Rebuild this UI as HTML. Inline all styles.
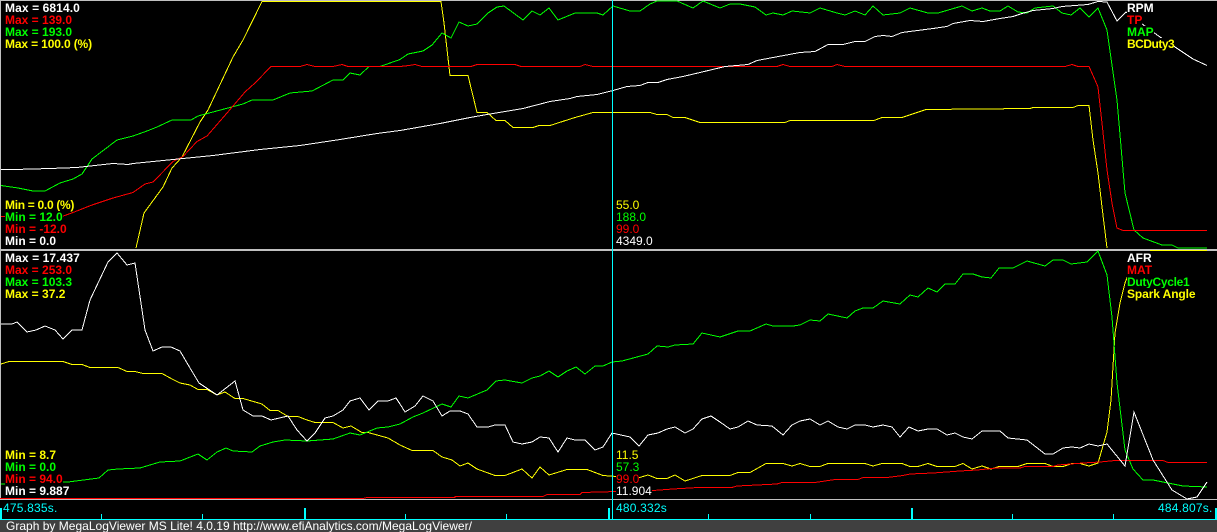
<!DOCTYPE html>
<html><head><meta charset="utf-8"><title>MegaLogViewer</title>
<style>
html,body{margin:0;padding:0;background:#000;width:1217px;height:532px;overflow:hidden}
#r{position:relative;width:1217px;height:532px;background:#000;overflow:hidden;font:12px/12px "Liberation Sans",Arial,sans-serif}
svg{position:absolute;left:0;top:0}
.t{position:absolute;white-space:pre;height:12px;line-height:12px;background:#000}
.b{font-weight:bold}
.w{color:#fff}.r{color:#f00}.g{color:#0f0}.y{color:#ff0}.c{color:#0ff;letter-spacing:.2px}
#s{position:absolute;left:0;top:520px;width:1217px;height:12px;background:#404040;color:#fff;line-height:12px}
#s span{position:absolute;left:6px;top:0;white-space:pre;letter-spacing:.01px}
</style></head><body><div id="r">
<svg width="1217" height="532" shape-rendering="crispEdges" fill="none" stroke-width="1">
<rect x="0" y="0" width="1217" height="1" fill="#c0c0c0"/>
<rect x="0" y="0" width="1" height="500" fill="#c0c0c0"/>
<rect x="0" y="249" width="1217" height="2" fill="#c0c0c0"/>
<rect x="0" y="499" width="1217" height="1" fill="#c0c0c0"/>

<polyline stroke="#ff0" points="136,248 144,213 163,187 172,168 182,157 200,122 208,110 233,57 243,40 262,1.5 441,1.5 444,23 450,75.5 468,75.5 477,112.5 487,112.5 496,120.5 505,120.5 513,127.5 533,127.5 539,125.5 550,125.5 575,117.5 593,112.5 650,112.5 657,114.5 667,114.5 673,117.5 685,117.5 700,122.5 785,122.5 790,120.5 874,120.5 882,117.5 902,117.5 926,109.5 1030,108.5 1033,107.5 1073,107.5 1078,105.5 1089,105.5 1093,140 1098,173 1102,207 1107,248"/>
<polyline stroke="#0f0" points="1,185.5 18,188 33,191 45,191 60,183 73,179 82,174 92,159 117,140 133,136 147,131 157,127 172,120 191,120 198,116 213,112 243,104 252,100 273,100 290,93 312,91 333,80 343,80 350,73 360,75 369,66.5 380,66.5 400,59.5 408,54 423,51 432,45 442,33 451,38 459,22 468,26 477,24 488,13 497,7 504,6 523,20 532,11 540,15 549,8 558,20 575,13 597,13 603,15 613,6 630,11 640,11 650,4 657,1 677,1 693,8 703,1 720,8 730,4 740,4 755,7 766,15 773,13 783,15 792,11 810,13 820,8 837,13 845,15 855,11 865,15 873,6 883,15 900,13 910,8 928,13 938,13 962,6 972,11 982,8 990,11 1000,11 1008,6 1018,12 1027,13 1035,8 1053,6 1062,13 1071,15 1080,8 1089,17 1098,8 1107,30 1117,100 1125,193 1134,230 1143,238 1162,245 1172,245 1178,248 1207,248"/>
<polyline stroke="#f00" points="1,216.5 62,216.5 73,212.5 92,205 113,198 133,192.5 145,184 153,182 173,161.5 183,156.5 197,141.5 207,136 227,113 245,92 255,83 271,66.5 300,66.5 307,64.5 315,66.5 333,66.5 342,64.5 348,66.5 400,66.5 409,65.5 415,64.5 422,66.5 471,66.5 477,64.5 515,64.5 521,66.5 580,66.5 585,64.5 593,66.5 777,66.5 783,64.5 790,66.5 832,66.5 837,64.5 845,66.5 1065,66.5 1072,64.5 1078,66.5 1089,66.5 1095,80 1098,87 1102,123 1107,170 1112,203 1117,228 1123,230.5 1207,230.5"/>
<polyline stroke="#fff" points="1,169.5 14,169.5 50,168.5 77,167.5 113,163.5 128,164.5 133,163.5 173,159.5 213,155.5 260,149.5 300,145.5 340,139.5 377,133.5 400,130.5 440,123.5 470,117.5 487,114.5 523,108.5 550,101.5 570,98.5 577,96.5 597,94.5 613,90.5 627,86.5 640,85.5 648,82.5 658,82.5 667,79.5 683,76.5 700,72.5 725,66.5 748,64.5 757,60.5 773,57.5 800,52.5 815,51.5 828,44.5 843,44.5 855,41.5 865,41.5 875,36.5 883,35.5 892,36.5 902,32.5 933,28.5 947,26.5 953,23.5 970,20.5 983,21.5 1000,18.5 1013,16.5 1022,13.5 1033,10.5 1053,8.5 1062,6.5 1088,4.5 1098,1.5 1107,2 1117,21 1126,12 1153,32 1160,37 1175,47 1193,59 1207,65.5"/>
<polyline stroke="#ff0" points="1150,250.5 1207,250.5"/>

<polyline stroke="#ff0" points="1,364 9,361.5 63,361.5 72,364.5 82,364.5 90,367.5 118,367.5 127,371.5 135,371.5 143,373.5 162,373.5 172,379 180,383 190,385 198,389.5 207,389.5 217,395 225,392 235,398.5 243,398.5 262,404 270,410.5 278,410.5 288,416.5 298,416.5 307,420 315,422.5 333,422.5 343,428 351,426 362,432.5 368,432.5 388,438 400,445 412,450.5 433,450.5 442,457 452,460 460,466 468,463 477,469 495,475.5 505,475.5 522,469 532,478 540,467 549,475 567,469.5 587,469.5 603,475.5 638,478 648,475 657,478.5 667,478.5 675,475 685,481 702,475.5 730,475.5 738,472.5 750,472.5 766,463.5 783,463.5 792,466 800,463.5 810,466.5 820,466.5 828,463.5 865,463.5 873,466 882,463.5 902,463.5 910,466.5 918,466.5 928,463.5 937,466.5 955,466.5 963,463.5 972,469 982,466 991,469 999,466.5 1018,466.5 1027,463.5 1045,463.5 1053,466.5 1063,466.5 1072,463.5 1080,463.5 1089,466 1098,463 1107,432 1111,400 1115,333 1120,303 1125,283 1130,270 1140,260"/>
<polyline stroke="#0f0" points="1,484 68,482 99,478 108,470 118,469 140,468 160,462 180,461 198,454 207,460 217,452 226,448 233,451 252,452 260,446 273,442 285,440 307,441 333,439 350,433 360,435 377,428 388,427 400,424 413,417 423,413 442,404 451,407 459,396 468,398 487,390 496,381 505,380 522,383 532,378 540,376 549,371 558,377 567,371 576,367 585,374 595,366 603,366 612,362 622,361 648,354 657,346 668,347 675,345 693,344 702,333 720,337 738,331 750,331 766,324 773,326 793,326 800,325 810,320 820,321 828,314 847,318 855,311 863,308 873,308 883,301 900,304 910,295 918,297 928,288 937,292 945,284 955,284 963,274 973,274 982,277 991,278 999,268 1013,268 1027,261 1045,266 1053,260 1063,260 1071,264 1087,262 1098,251 1107,275 1112,317 1117,383 1125,450 1133,469 1143,480 1153,480 1183,486 1207,487"/>
<polyline stroke="#f00" points="0,498.5 363,498.5 367,497.5 455,497.5 455,496.5 543,496.5 547,494.5 580,494.5 582,492.5 653,490.5 673,489 698,487.5 732,487.5 737,486 777,484 782,482.5 815,482.5 835,479.5 858,479.5 863,477.5 887,477.5 903,475.5 910,474 933,473 960,471 977,470 997,468 1020,468 1025,466.5 1053,466.5 1058,465 1083,463 1100,462 1115,460.5 1163,460.5 1168,462.5 1207,462.5"/>
<polyline stroke="#fff" points="1,324 12,324 17,322 27,332 36,330 45,326 55,330 63,339 72,330 82,330 90,300 108,262 117,253 127,265 135,263 145,330 153,351 162,347 171,347 180,351 190,368 199,383 217,395 235,381 243,410 253,416 262,416 271,420 288,416 297,430 307,441 315,433 325,418 333,416 343,410 350,401 360,398 369,410 378,401 388,401 396,398 400,404 405,412 415,406 423,396 433,401 442,416 450,411 460,411 468,414 477,427 488,427 495,425 505,425 513,442 522,444 532,442 540,437 549,438 558,452 567,438 575,440 585,440 595,450 603,447 612,433 630,437 639,446 648,435 658,433 667,429 675,427 685,433 693,429 702,419 711,416 720,422 730,429 738,427 748,421 757,425 772,426 783,435 792,425 800,421 810,419 820,425 828,421 838,427 847,429 855,425 865,425 873,427 883,425 892,427 900,437 909,427 918,431 928,429 937,429 947,435 955,433 963,437 972,439 982,431 1000,431 1008,438 1027,440 1045,454 1053,454 1063,448 1072,447 1080,448 1089,444 1098,446 1107,444 1125,466 1134,412 1153,460 1172,490 1187,499 1197,497 1207,482"/>

<rect x="612" y="0" width="1" height="520" fill="#0ff"/>
<rect x="0" y="519" width="1217" height="1" fill="#0ff"/>
<g fill="#0ff">
<rect x="0" y="508" width="2" height="11"/><rect x="101" y="514" width="1" height="5"/><rect x="202" y="514" width="1" height="5"/><rect x="304" y="508" width="2" height="11"/><rect x="405" y="514" width="1" height="5"/><rect x="506" y="514" width="1" height="5"/><rect x="608" y="508" width="2" height="11"/><rect x="708" y="514" width="1" height="5"/><rect x="810" y="514" width="1" height="5"/><rect x="911" y="508" width="2" height="11"/><rect x="1012" y="514" width="1" height="5"/><rect x="1113" y="514" width="1" height="5"/><rect x="1215" y="508" width="2" height="11"/>
</g>
</svg>

<div class="t b w" style="left:5px;top:2px;letter-spacing:.1px">Max = 6814.0</div>
<div class="t b r" style="left:5px;top:14px">Max = 139.0</div>
<div class="t b g" style="left:5px;top:26px">Max = 193.0</div>
<div class="t b y" style="left:5px;top:38px;letter-spacing:-.14px">Max = 100.0 (%)</div>
<div class="t b y" style="left:5px;top:199px;letter-spacing:-.3px">Min = 0.0 (%)</div>
<div class="t b g" style="left:5px;top:211px">Min = 12.0</div>
<div class="t b r" style="left:5px;top:223px">Min = -12.0</div>
<div class="t b w" style="left:5px;top:235px">Min = 0.0</div>

<div class="t y" style="left:616px;top:199px">55.0</div>
<div class="t g" style="left:616px;top:211px">188.0</div>
<div class="t r" style="left:616px;top:223px">99.0</div>
<div class="t w" style="left:616px;top:235px">4349.0</div>

<div class="t b w" style="left:1127px;top:2px">RPM</div>
<div class="t b r" style="left:1127px;top:14px">TP</div>
<div class="t b g" style="left:1127px;top:26px">MAP</div>
<div class="t b y" style="left:1127px;top:38px;letter-spacing:-.5px">BCDuty3</div>

<div class="t b w" style="left:5px;top:252px;letter-spacing:.1px">Max = 17.437</div>
<div class="t b r" style="left:5px;top:264px">Max = 253.0</div>
<div class="t b g" style="left:5px;top:276px">Max = 103.3</div>
<div class="t b y" style="left:5px;top:288px">Max = 37.2</div>
<div class="t b y" style="left:5px;top:449px">Min = 8.7</div>
<div class="t b g" style="left:5px;top:461px">Min = 0.0</div>
<div class="t b r" style="left:5px;top:473px">Min = 94.0</div>
<div class="t b w" style="left:5px;top:485px">Min = 9.887</div>

<div class="t y" style="left:616px;top:449px">11.5</div>
<div class="t g" style="left:616px;top:461px">57.3</div>
<div class="t r" style="left:616px;top:473px">99.0</div>
<div class="t w" style="left:616px;top:485px">11.904</div>

<div class="t b w" style="left:1127px;top:252px">AFR</div>
<div class="t b r" style="left:1127px;top:264px">MAT</div>
<div class="t b g" style="left:1127px;top:276px;letter-spacing:-.3px">DutyCycle1</div>
<div class="t b y" style="left:1127px;top:288px;letter-spacing:-.1px">Spark Angle</div>

<div class="t c" style="left:3px;top:502px">475.835s.</div>
<div class="t c" style="left:616px;top:502px">480.332s</div>
<div class="t c" style="left:1158px;top:502px">484.807s.</div>

<div id="s"><span>Graph by MegaLogViewer MS Lite! 4.0.19 http://www.efiAnalytics.com/MegaLogViewer/</span></div>
</div></body></html>
